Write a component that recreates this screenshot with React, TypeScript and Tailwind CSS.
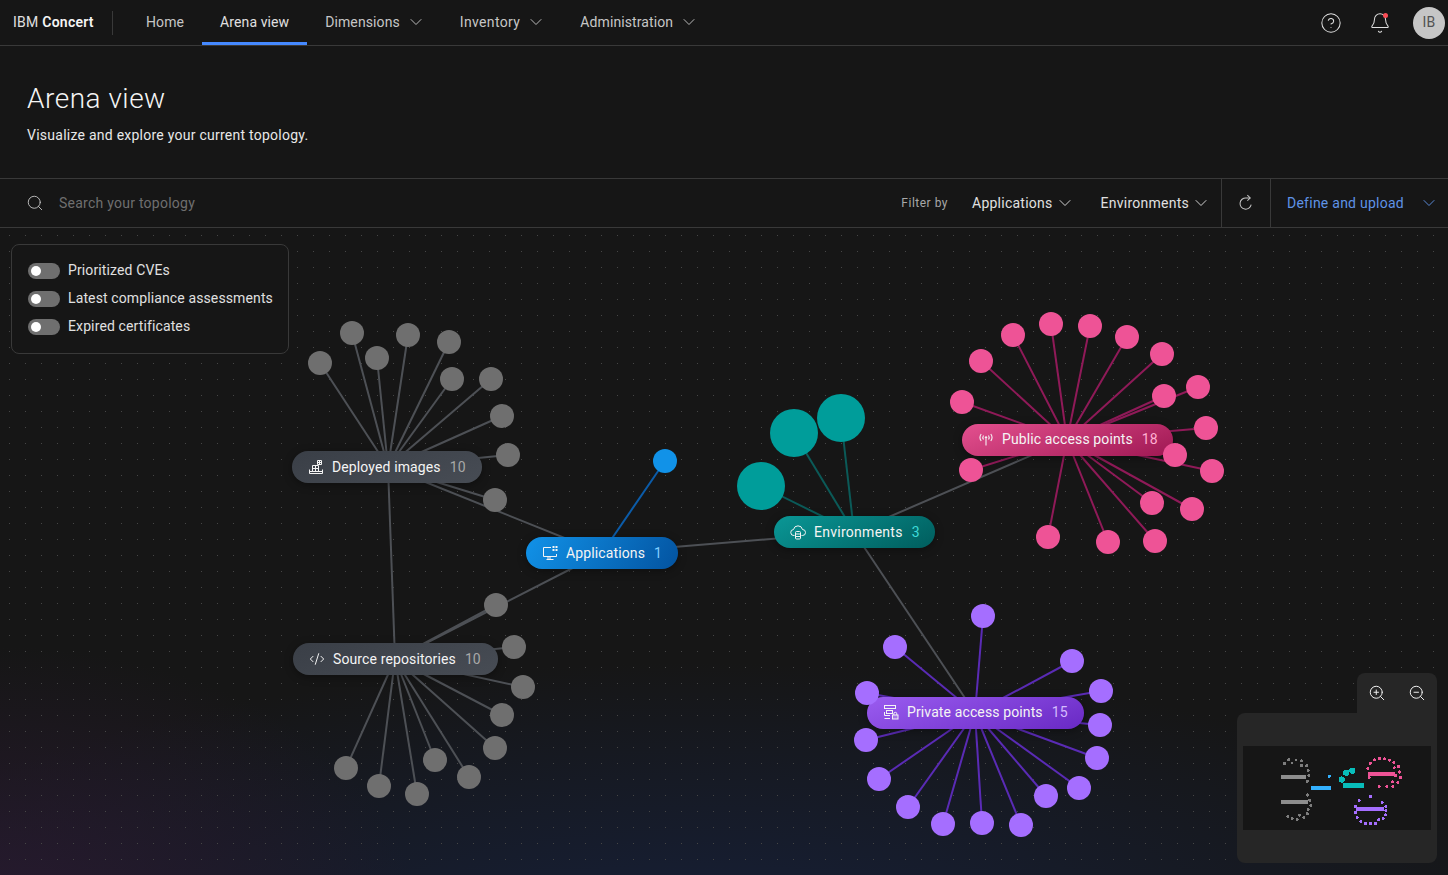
import { ChevronDown, CircleHelp, Bell, Search, ZoomIn, ZoomOut, CodeXml } from "lucide-react";
import type { ReactNode } from "react";

type Pt = [number, number];

type Cluster = {
    hub: Pt;
    edge: string;
    fill: string;
    mini: string;
    r: number;
    nodes: Pt[];
};

const clusters: Cluster[] = [
    {
        hub: [388, 467],
        edge: "#4d5055",
        fill: "#6f6f6f",
        mini: "#7d7d7d",
        r: 12,
        nodes: [
            [320, 363], [352, 333], [377, 358], [408, 335], [449, 342],
            [452, 379], [491, 379], [502, 416], [508, 455], [495, 500],
        ],
    },
    {
        hub: [395, 659],
        edge: "#4d5055",
        fill: "#6f6f6f",
        mini: "#7d7d7d",
        r: 12,
        nodes: [
            [496, 605], [514, 647], [523, 687], [502, 715], [495, 748],
            [469, 777], [435, 760], [417, 794], [379, 786], [346, 768],
        ],
    },
    {
        hub: [602, 553],
        edge: "#0b5ba8",
        fill: "#1192e8",
        mini: "#33b1ff",
        r: 12,
        nodes: [[665, 461]],
    },
    {
        hub: [854, 532],
        edge: "#0b5a58",
        fill: "#009d9a",
        mini: "#08bdba",
        r: 24,
        nodes: [[794, 433], [841, 418], [761, 486]],
    },
    {
        hub: [1067, 440],
        edge: "#8f1a58",
        fill: "#ee5396",
        mini: "#ee5396",
        r: 12,
        nodes: [
            [962, 402], [981, 361], [1013, 335], [1051, 324], [1090, 326], [1127, 337],
            [1162, 354], [1164, 396], [1198, 387], [1206, 428], [1175, 455], [1212, 471],
            [1152, 503], [1192, 509], [1155, 541], [1108, 542], [1048, 537], [971, 470],
        ],
    },
    {
        hub: [975, 713],
        edge: "#5a2bb5",
        fill: "#a56eff",
        mini: "#a56eff",
        r: 12,
        nodes: [
            [983, 616], [895, 647], [1072, 661], [1101, 691], [867, 693],
            [1100, 725], [866, 740], [1097, 758], [879, 779], [1079, 788],
            [1046, 796], [908, 807], [943, 824], [982, 823], [1021, 825],
        ],
    },
];

// connections between the hubs, always gray
const hubLinks: [Pt, Pt][] = [
    [[602, 553], [388, 467]],
    [[388, 467], [395, 659]],
    [[602, 553], [395, 659]],
    [[602, 553], [854, 532]],
    [[854, 532], [1067, 440]],
    [[854, 532], [975, 713]],
];

const miniPills = [
    { x: 292, y: 451, w: 190, fill: "#8d8d8d" },
    { x: 293, y: 643, w: 205, fill: "#8d8d8d" },
    { x: 526, y: 537, w: 152, fill: "#33b1ff" },
    { x: 774, y: 516, w: 161, fill: "#08bdba" },
    { x: 962, y: 424, w: 211, fill: "#ee5396" },
    { x: 867, y: 697, w: 217, fill: "#a56eff" },
];

function DeployedIcon() {
    return (
        <svg width="16" height="16" viewBox="0 0 16 16" fill="none" stroke="currentColor" strokeWidth="1">
            <path d="M1.5 10.5v4h13v-4" />
            <path d="M1.5 12.5h13" />
            <path d="M4.5 12V6.5h6V12M7.5 6.5V12M4.5 9.5h6" />
            <path d="M9.5 1.5h4v4h-4zM11.5 1.5v4M9.5 3.5h4" />
        </svg>
    );
}

function AppIcon() {
    return (
        <svg width="16" height="16" viewBox="0 0 16 16" fill="none" stroke="currentColor" strokeWidth="1">
            <path d="M9 2.5H1.5v9h13V9" />
            <path d="M8 11.5v3M4.5 14.5h7M6 11.5v3" />
            <path d="M10.5 1h2v2h-2zM13.5 1h2v2h-2zM10.5 4h2v2h-2zM13.5 4h2v2h-2z" fill="currentColor" stroke="none" />
        </svg>
    );
}

function CloudIcon() {
    return (
        <svg width="16" height="16" viewBox="0 0 16 16" fill="none" stroke="currentColor" strokeWidth="1">
            <path d="M4.5 11.5H4a3 3 0 0 1-.5-6A4.6 4.6 0 0 1 12.5 5.5a3 3 0 0 1 0 6H11.5" />
            <rect x="5.5" y="7.5" width="5" height="7.5" rx="1" />
            <path d="M5.5 10h5M5.5 12.5h5" />
        </svg>
    );
}

function AntennaIcon() {
    return (
        <svg width="16" height="16" viewBox="0 0 16 16" fill="none" stroke="currentColor" strokeWidth="1.1">
            <path d="M8 8v6.5" />
            <circle cx="8" cy="6.5" r="1.2" fill="currentColor" stroke="none" />
            <path d="M5.5 4.5a3.5 3.5 0 0 0 0 4M10.5 4.5a3.5 3.5 0 0 1 0 4" />
            <path d="M3.2 3a6 6 0 0 0 0 7M12.8 3a6 6 0 0 1 0 7" />
        </svg>
    );
}

function PrivateIcon() {
    return (
        <svg width="16" height="16" viewBox="0 0 16 16" fill="none" stroke="currentColor" strokeWidth="1">
            <rect x="1.5" y="1.5" width="11" height="3" />
            <rect x="3.5" y="6.5" width="6" height="3" />
            <path d="M1.5 8v3.5H7M1.5 14.5H7" />
            <rect x="9.5" y="11" width="5.5" height="4" fill="currentColor" fillOpacity="0.25" />
            <path d="M10.8 11V9.8a1.5 1.5 0 0 1 3 0V11" />
        </svg>
    );
}

function RefreshIcon() {
    return (
        <svg width="18" height="18" viewBox="0 0 16 16" fill="none" stroke="currentColor" strokeWidth="0.9">
            <path d="M12.6 9.5A5 5 0 1 1 8 3.5h3.5" />
            <path d="M9.2 1l2.6 2.5-2.6 2.5" />
        </svg>
    );
}

function NavItem({
    label,
    active,
    menu,
    className = "tracking-[0.1px]",
}: {
    label: string;
    active?: boolean;
    menu?: boolean;
    className?: string;
}) {
    return (
        <a
            className={`flex h-full items-center gap-[6px] border-b-[3px] pl-[18px] pt-[2px] ${className} ${menu ? "pr-4" : "pr-[18px]"} ${active ? "border-[#4589ff] text-[#e0e0e0]" : "border-transparent text-[#c6c6c6]"
                }`}
        >
            {label}
            {menu && <ChevronDown size={20} strokeWidth={1.1} className="text-[#c6c6c6]" />}
        </a>
    );
}

function Pill({
    className,
    icon,
    label,
    count,
    countClass,
}: {
    className: string;
    icon: ReactNode;
    label: string;
    count: number;
    countClass: string;
}) {
    return (
        <div
            className={`absolute z-10 flex h-8 items-center rounded-full pl-4 text-[14px] text-[#f4f4f4] shadow-[0_2px_8px_rgba(0,0,0,0.35)] ${className}`}
        >
            <span className="mr-2 shrink-0">{icon}</span>
            <span className="whitespace-nowrap">{label}</span>
            <span className={`ml-[9px] ${countClass}`}>{count}</span>
        </div>
    );
}

function Toggle({ label }: { label: string }) {
    return (
        <div className="flex h-7 items-center gap-2">
            <span className="flex h-4 w-8 shrink-0 items-center rounded-full bg-[#6f6f6f] pl-[3px]">
                <span className="h-[10px] w-[10px] rounded-full bg-white" />
            </span>
            <span className="whitespace-nowrap pb-[2px] text-[#e0e0e0]">{label}</span>
        </div>
    );
}

function MiniMap() {
    return (
        <svg viewBox="0 228 1448 646" className="h-[84px] w-[188px]" shapeRendering="crispEdges">
            {miniPills.map((p) => (
                <rect key={p.x} x={p.x} y={p.y} width={p.w} height={32} fill={p.fill} />
            ))}
            {clusters.map((c) =>
                c.nodes.map(([x, y]) => <circle key={`${x}-${y}`} cx={x} cy={y} r={c.r} fill={c.mini} />)
            )}
        </svg>
    );
}

export default function App() {
    return (
        <div
            className="flex h-[875px] w-[1448px] flex-col overflow-hidden bg-[#161616] text-[14px] tracking-[0.12px] text-[#f4f4f4]"
            style={{ fontFamily: '"Roboto", "Noto Sans", sans-serif' }}
        >
            <header className="flex h-[46px] shrink-0 items-center border-b border-[#393939]">
                <div className="flex h-[24px] w-[113px] shrink-0 items-center border-r border-[#393939] pl-[13px] whitespace-nowrap tracking-[0.25px] text-[#e0e0e0]">
                    IBM&nbsp;<span className="font-semibold text-[#f4f4f4]">Concert</span>
                </div>
                <nav className="ml-[15px] flex h-full">
                    <NavItem label="Home" />
                    <NavItem label="Arena view" active />
                    <NavItem label="Dimensions" menu />
                    <NavItem label="Inventory" menu className="tracking-[0.35px]" />
                    <NavItem label="Administration" menu />
                </nav>
                <div className="ml-auto flex items-center text-[#e0e0e0]">
                    <CircleHelp size={22} strokeWidth={1.1} className="mr-[27px]" />
                    <span className="relative mr-[22px]">
                        <Bell size={22} strokeWidth={1.1} />
                        <span className="absolute right-[3px] top-[1px] h-[5px] w-[5px] rounded-full bg-[#fa4d56]" />
                    </span>
                    <span className="mr-[3px] flex h-8 w-8 items-center justify-center rounded-full bg-[#c6c6c6] text-[#525252]">
                        IB
                    </span>
                </div>
            </header>

            <section className="h-[133px] shrink-0 border-b border-[#393939] pl-[27px] pt-[35px]">
                <h1 className="text-[28px] font-light leading-[36px] tracking-[0.5px] text-[#f4f4f4]">Arena view</h1>
                <p className="mt-[9px] leading-[18px] tracking-[0.25px] text-[#e8e8e8]">
                    Visualize and explore your current topology.
                </p>
            </section>

            <div className="flex h-[49px] shrink-0 items-center border-b border-[#393939]">
                <Search size={18} strokeWidth={1.2} className="ml-[26px] text-[#c6c6c6]" />
                <span className="ml-[15px] tracking-[0.25px] text-[#6f6f6f]">Search your topology</span>
                <span className="ml-auto text-[12px] tracking-[0.5px] text-[#a8a8a8]">Filter by</span>
                <button className="ml-6 flex items-center gap-[2px] tracking-[0.25px] text-[#e0e0e0]">
                    Applications
                    <ChevronDown size={20} strokeWidth={1.1} />
                </button>
                <button className="ml-[26px] flex items-center gap-[2px] tracking-[0.25px] text-[#e0e0e0]">
                    Environments
                    <ChevronDown size={20} strokeWidth={1.1} />
                </button>
                <button className="ml-[10px] flex h-full w-[49px] items-center justify-center border-l border-[#393939] text-[#c6c6c6]">
                    <RefreshIcon />
                </button>
                <button className="flex h-full w-[178px] items-center justify-between border-l border-[#393939] pl-4 pr-[9px] tracking-[0.25px] text-[#5f93e6]">
                    Define and upload
                    <ChevronDown size={20} strokeWidth={1.1} />
                </button>
            </div>

            <main className="relative min-h-0 flex-1 bg-[radial-gradient(ellipse_420px_280px_at_0%_108%,#281a30_0%,transparent_100%),radial-gradient(ellipse_900px_290px_at_48%_112%,#16203a_0%,transparent_100%)]">
                <div className="absolute inset-0 bg-[radial-gradient(circle_at_9.5px_7.5px,#464646_0.6px,transparent_1px)] bg-[size:16px_16px]" />

                <svg viewBox="0 228 1448 647" className="absolute inset-0 h-full w-full" fill="none" strokeWidth="2">
                    {clusters.map((c) =>
                        c.nodes.map(([x, y]) => (
                            <line key={`${x}-${y}`} x1={c.hub[0]} y1={c.hub[1]} x2={x} y2={y} stroke={c.edge} />
                        ))
                    )}
                    {hubLinks.map(([a, b]) => (
                        <line key={`${a[0]}-${b[0]}`} x1={a[0]} y1={a[1]} x2={b[0]} y2={b[1]} stroke="#4d5055" />
                    ))}
                </svg>

                <Pill
                    className="left-[292px] top-[223px] w-[190px] bg-[linear-gradient(160deg,#3a3f47,#474c54)]"
                    icon={<DeployedIcon />}
                    label="Deployed images"
                    count={10}
                    countClass="text-[#a8a8a8]"
                />
                <Pill
                    className="left-[293px] top-[415px] w-[205px] bg-[linear-gradient(160deg,#3a3f47,#474c54)]"
                    icon={<CodeXml size={16} strokeWidth={1.5} />}
                    label="Source repositories"
                    count={10}
                    countClass="text-[#a8a8a8]"
                />
                <Pill
                    className="left-[526px] top-[309px] w-[152px] bg-[linear-gradient(120deg,#1192e8,#0353a0)]"
                    icon={<AppIcon />}
                    label="Applications"
                    count={1}
                    countClass="text-[#82cfff]"
                />
                <Pill
                    className="left-[774px] top-[288px] w-[161px] tracking-[0.27px] bg-[linear-gradient(150deg,#0a9796,#005d5d)]"
                    icon={<CloudIcon />}
                    label="Environments"
                    count={3}
                    countClass="text-[#3ddbd9]"
                />
                <Pill
                    className="left-[962px] top-[196px] w-[211px] pb-[2px] bg-[linear-gradient(160deg,#e4508f,#9f1853)]"
                    icon={<AntennaIcon />}
                    label="Public access points"
                    count={18}
                    countClass="text-[#ffafd2]"
                />
                <Pill
                    className="left-[867px] top-[469px] w-[217px] pb-[2px] bg-[linear-gradient(160deg,#9a5cf0,#6929c4)]"
                    icon={<PrivateIcon />}
                    label="Private access points"
                    count={15}
                    countClass="text-[#d4bbff]"
                />

                <svg viewBox="0 228 1448 647" className="pointer-events-none absolute inset-0 z-20 h-full w-full">
                    {clusters.map((c) =>
                        c.nodes.map(([x, y]) => <circle key={`${x}-${y}`} cx={x} cy={y} r={c.r} fill={c.fill} />)
                    )}
                </svg>

                <div className="absolute left-[11px] top-4 z-30 w-[278px] rounded-[8px] border border-[#393939] bg-[#161616] px-4 py-[12px]">
                    <Toggle label="Prioritized CVEs" />
                    <Toggle label="Latest compliance assessments" />
                    <Toggle label="Expired certificates" />
                </div>

                <div className="absolute bottom-3 right-[11px] z-30 flex w-[200px] flex-col items-end">
                    <div className="flex h-10 w-20 items-center rounded-t-[8px] bg-[#262626] text-[#f4f4f4]">
                        <span className="flex w-10 justify-center">
                            <ZoomIn size={18} strokeWidth={1.3} />
                        </span>
                        <span className="flex w-10 justify-center">
                            <ZoomOut size={18} strokeWidth={1.3} />
                        </span>
                    </div>
                    <div className="h-[150px] w-full rounded-[8px] rounded-tr-none bg-[#262626] px-[6px] pt-[33px]">
                        <div className="bg-[#161616]">
                            <MiniMap />
                        </div>
                    </div>
                </div>
            </main>
        </div>
    );
}
